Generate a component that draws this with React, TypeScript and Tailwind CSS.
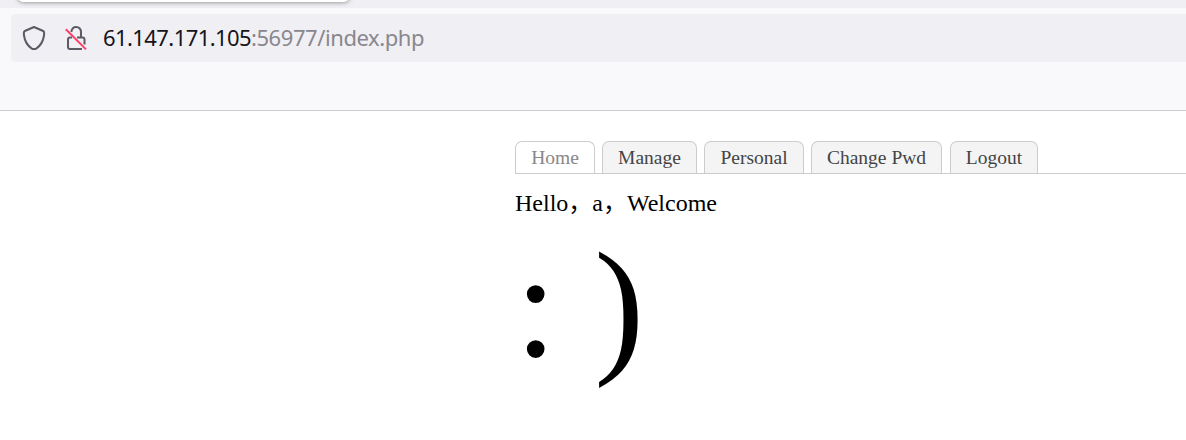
const tabs = [
  { label: 'Home', box: 'w-[80px] bg-white text-[#888888] mr-[7px]' },
  { label: 'Manage', box: 'w-[95px] bg-[#f4f4f4] text-[#444444] mr-[7px]' },
  { label: 'Personal', box: 'w-[100px] bg-[#f4f4f4] text-[#444444] mr-[7px]' },
  { label: 'Change Pwd', box: 'w-[131px] bg-[#f4f4f4] text-[#444444] mr-[8px]' },
  { label: 'Logout', box: 'w-[88px] bg-[#f4f4f4] text-[#444444]' },
];

function Shield() {
  return (
    <svg width="24" height="26" viewBox="0 0 24 26" fill="none" stroke="#5b5b66" strokeWidth="2" strokeLinejoin="round" className="shrink-0">
      <path d="M12 2 L21.2 6 C22.4 6.6 22.4 8 22 10.5 C21.2 16 18.8 20.4 14.5 23.3 C12.5 24.5 11.5 24.5 9.5 23.3 C5.2 20.4 2.8 16 2 10.5 C1.6 8 1.6 6.6 2.8 6 Z" />
    </svg>
  );
}

function InsecureLock() {
  return (
    <svg width="24" height="26" viewBox="0 0 24 26" fill="none" className="shrink-0">
      <path d="M7.3 7 C7.8 3.8 9.5 2 12 2 C15.2 2 17 4.4 17 7.5 V12" stroke="#5b5b66" strokeWidth="2" />
      <path d="M8 12.5 H6 Q4 12.5 4 14.5 V22 Q4 24 6 24 H18 M13 12.5 H18.5 Q20.5 12.5 20.5 14.5 V19.5" stroke="#5b5b66" strokeWidth="2" />
      <path d="M1.8 4.2 L22 24.4" stroke="#ff3f68" strokeWidth="2" />
    </svg>
  );
}

export default function App() {
  return (
    <div className="h-[440px] w-full overflow-hidden bg-white">
      <header className="h-[111px] border-b border-[#cbcbd0] bg-[#f9f9fb]">
        <div className="h-2 overflow-hidden bg-[#f0f0f4] pl-[18px]">
          <div className="-mt-3 h-[14px] w-[331px] rounded-[5px] bg-white shadow-[0_0_5px_rgba(0,0,0,0.5)]" />
        </div>
        <div className="ml-[11px] mt-[6px] flex h-12 items-center rounded-l-[5px] bg-[#f0eff4] pl-[11px]">
          <Shield />
          <div className="w-[18px]" />
          <InsecureLock />
          <div className="mb-[2px] ml-[15px] whitespace-pre font-['Noto_Sans','Open_Sans',sans-serif] text-[22px] leading-[30px] tracking-[-0.58px] text-[#15141a]">
            61.147.171.105<span className="tracking-[-0.43px] text-[#88878d]">:56977/index.php</span>
          </div>
        </div>
      </header>
      <main className="pl-[515px] pt-[30px] font-['Liberation_Serif','Noto_Sans_CJK_SC',serif] text-black">
        <nav className="flex h-[33px] border-b border-[#cccccc]">
          {tabs.map((t) => (
            <div
              key={t.label}
              className={`flex h-8 items-center justify-center whitespace-nowrap rounded-t-[7px] border border-b-0 border-[#cccccc] text-[19.5px] leading-8 ${t.box}`}
            >
              {t.label}
            </div>
          ))}
        </nav>
        <p className="mt-[14px] whitespace-nowrap text-[24px] leading-[30px]" lang="zh-CN">Hello，a，Welcome</p>
        <div className="mt-px whitespace-nowrap text-[150px] leading-[172px]">: )</div>
      </main>
    </div>
  );
}
